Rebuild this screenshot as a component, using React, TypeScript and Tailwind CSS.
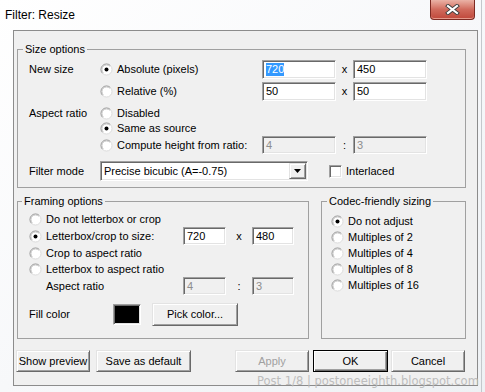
import React from "react";

const sunken =
  "border border-t-[#a0a0a0] border-l-[#a0a0a0] border-b-white border-r-white shadow-[inset_1px_1px_0_#696969,inset_-1px_-1px_0_#e3e3e3]";
const raised =
  "border border-t-[#e3e3e3] border-l-[#e3e3e3] border-b-[#696969] border-r-[#696969] shadow-[inset_1px_1px_0_#ffffff,inset_-1px_-1px_0_#a0a0a0] bg-[#f0f0f0]";

function Radio({ checked = false }: { checked?: boolean }) {
  return (
    <svg width="13" height="13" viewBox="0 0 13 13" className="shrink-0">
      <circle cx="6.5" cy="6.5" r="5.5" fill="#ffffff" />
      <path d="M2.6 10.4 A5.5 5.5 0 0 1 10.4 2.6" fill="none" stroke="#8f8f8f" />
      <path d="M10.4 2.6 A5.5 5.5 0 0 1 2.6 10.4" fill="none" stroke="#dcdcdc" />
      <path d="M3.3 9.7 A4.5 4.5 0 0 1 9.7 3.3" fill="none" stroke="#c8c8c8" />
      {checked && <circle cx="6.5" cy="6.5" r="2" fill="#000000" />}
    </svg>
  );
}

function Option({ label, checked }: { label: string; checked?: boolean }) {
  return (
    <label className="flex items-center">
      <Radio checked={checked} />
      <span className="ml-[4px]">{label}</span>
    </label>
  );
}

function Field({
  className,
  value,
  disabled,
  selected,
}: {
  className: string;
  value: string;
  disabled?: boolean;
  selected?: boolean;
}) {
  return (
    <div
      className={`${sunken} ${disabled ? "bg-[#f0f0f0] text-[#8d8d8d]" : "bg-white"} h-full flex items-center pl-[3px] ${className}`}
    >
      {selected ? <span className="bg-[#3399ff] text-white leading-[13px]">{value}</span> : <span>{value}</span>}
    </div>
  );
}

function Button({ className, label, disabled }: { className: string; label: string; disabled?: boolean }) {
  return (
    <button className={`${raised} h-full flex items-center justify-center ${disabled ? "text-[#a0a0a0]" : ""} ${className}`}>
      {label}
    </button>
  );
}

export default function App() {
  return (
    <div className="relative flex w-[485px] h-[392px] overflow-hidden bg-gradient-to-br from-white via-[#f7f8fa] to-[#eef1f4] font-['Liberation_Sans',Arial,sans-serif] text-[11px] leading-[13px] text-black">
      <div className="w-[481px]">
        {/* Title bar */}
        <div className="flex h-[30px]">
          <div className="pl-[5px] pt-[8px] text-[12px] leading-[14px]">Filter: Resize</div>
          <div className="ml-auto mr-[6px] w-[45px] h-[20px] rounded-b-[4px] border border-t-0 border-[#7d2a22] bg-gradient-to-b from-[#eab2a6] via-[#d06a5c] to-[#c0473a] flex items-center justify-center shadow-[inset_0_-1px_0_#e69a8c]">
            <svg width="15" height="11" viewBox="0 0 15 11">
              <path d="M3 2 L12 9 M12 2 L3 9" stroke="#3b3b3b" strokeWidth="4" strokeLinecap="square" />
              <path d="M3 2 L12 9 M12 2 L3 9" stroke="#ffffff" strokeWidth="2.2" strokeLinecap="square" />
            </svg>
          </div>
        </div>

        {/* Client area */}
        <div className="ml-[13px] w-[465px] h-[356px] border border-[#8c8c8c] bg-[#f0f0f0]">
          {/* Size options */}
          <fieldset className="ml-[3px] mt-[12px] w-[449px] h-[145px] border border-[#a0a0a0]">
            <legend className="ml-[5px] px-[2px] leading-[13px]">Size options</legend>

            <div className="flex items-center h-[19px] mt-[4px] pl-[11px]">
              <span className="w-[71px]">New size</span>
              <div className="w-[162px]">
                <Option label="Absolute (pixels)" checked />
              </div>
              <Field className="w-[74px]" value="720" selected />
              <span className="w-[17px] text-center">x</span>
              <Field className="w-[74px]" value="450" />
            </div>

            <div className="flex items-center h-[19px] mt-[3px] pl-[11px]">
              <span className="w-[71px]" />
              <div className="w-[162px]">
                <Option label="Relative (%)" />
              </div>
              <Field className="w-[74px]" value="50" />
              <span className="w-[17px] text-center">x</span>
              <Field className="w-[74px]" value="50" />
            </div>

            <div className="flex items-center h-[16px] mt-[4px] pl-[11px]">
              <span className="w-[71px]">Aspect ratio</span>
              <Option label="Disabled" />
            </div>
            <div className="flex items-center h-[15px] pl-[82px]">
              <Option label="Same as source" checked />
            </div>
            <div className="flex items-center h-[18px] pl-[82px]">
              <div className="w-[162px]">
                <Option label="Compute height from ratio:" />
              </div>
              <Field className="w-[74px]" value="4" disabled />
              <span className="w-[17px] text-center">:</span>
              <Field className="w-[74px]" value="3" disabled />
            </div>

            <div className="flex items-center h-[20px] mt-[7px] pl-[11px]">
              <span className="w-[71px]">Filter mode</span>
              <div className={`${sunken} bg-white w-[208px] h-full flex items-center pl-[3px] pr-[1px]`}>
                <span>Precise bicubic (A=-0.75)</span>
                <div className={`${raised} ml-auto w-[17px] h-[16px] flex items-center justify-center`}>
                  <svg width="7" height="4" viewBox="0 0 7 4">
                    <polygon points="0,0 7,0 3.5,4" fill="#000000" />
                  </svg>
                </div>
              </div>
              <div className={`${sunken} bg-white ml-[21px] w-[13px] h-[13px]`} />
              <span className="ml-[4px]">Interlaced</span>
            </div>
          </fieldset>

          <div className="flex mt-[7px] ml-[3px]">
            {/* Framing options */}
            <fieldset className="w-[292px] h-[144px] border border-[#a0a0a0]">
              <legend className="ml-[4px] px-[2px] leading-[13px]">Framing options</legend>
              <div className="flex items-center h-[16px] mt-[3px] pl-[11px]">
                <Option label="Do not letterbox or crop" />
              </div>
              <div className="flex items-center h-[18px] pl-[11px]">
                <div className="w-[154px]">
                  <Option label="Letterbox/crop to size:" checked />
                </div>
                <Field className="w-[43px]" value="720" />
                <span className="w-[26px] text-center">x</span>
                <Field className="w-[42px]" value="480" />
              </div>
              <div className="flex items-center h-[16px] pl-[11px]">
                <Option label="Crop to aspect ratio" />
              </div>
              <div className="flex items-center h-[16px] pl-[11px]">
                <Option label="Letterbox to aspect ratio" />
              </div>
              <div className="flex items-center h-[18px] pl-[28px]">
                <span className="w-[137px]">Aspect ratio</span>
                <Field className="w-[43px]" value="4" disabled />
                <span className="w-[26px] text-center">:</span>
                <Field className="w-[42px]" value="3" disabled />
              </div>
              <div className="flex items-center h-[23px] mt-[8px] pl-[11px]">
                <span className="w-[84px]">Fill color</span>
                <div className={`${sunken} bg-black w-[28px] h-[21px]`} />
                <Button className="ml-[11px] w-[86px]" label="Pick color..." />
              </div>
            </fieldset>

            {/* Codec-friendly sizing */}
            <fieldset className="ml-[12px] w-[145px] h-[144px] border border-[#a0a0a0]">
              <legend className="ml-[5px] px-[2px] leading-[13px]">Codec-friendly sizing</legend>
              <div className="flex flex-col mt-[5px] pl-[9px]">
                <div className="flex items-center h-[16px]">
                  <Option label="Do not adjust" checked />
                </div>
                <div className="flex items-center h-[16px]">
                  <Option label="Multiples of 2" />
                </div>
                <div className="flex items-center h-[16px]">
                  <Option label="Multiples of 4" />
                </div>
                <div className="flex items-center h-[16px]">
                  <Option label="Multiples of 8" />
                </div>
                <div className="flex items-center h-[16px]">
                  <Option label="Multiples of 16" />
                </div>
              </div>
            </fieldset>
          </div>

          {/* Buttons */}
          <div className="flex h-[22px] mt-[11px] ml-[2px]">
            <Button className="w-[74px]" label="Show preview" />
            <Button className="ml-[6px] w-[95px]" label="Save as default" />
            <Button className="ml-[44px] w-[74px]" label="Apply" disabled />
            <button className="ml-[4px] w-[75px] h-full border border-black bg-[#f0f0f0] shadow-[inset_1px_1px_0_#ffffff,inset_-1px_-1px_0_#696969,inset_-2px_-2px_0_#a0a0a0]">
              OK
            </button>
            <Button className="ml-[3px] w-[74px]" label="Cancel" />
          </div>
        </div>
      </div>
      {/* window frame edge */}
      <div className="w-px h-full bg-[#c4c8cc]" />

      {/* watermark */}
      <div className="absolute left-[257px] top-[375px] font-['DejaVu_Sans',Verdana,sans-serif] text-[11.5px] leading-[13px] text-[#bdbdbd]">
        Post 1/8 | postoneeighth.blogspot.com
      </div>
    </div>
  );
}
